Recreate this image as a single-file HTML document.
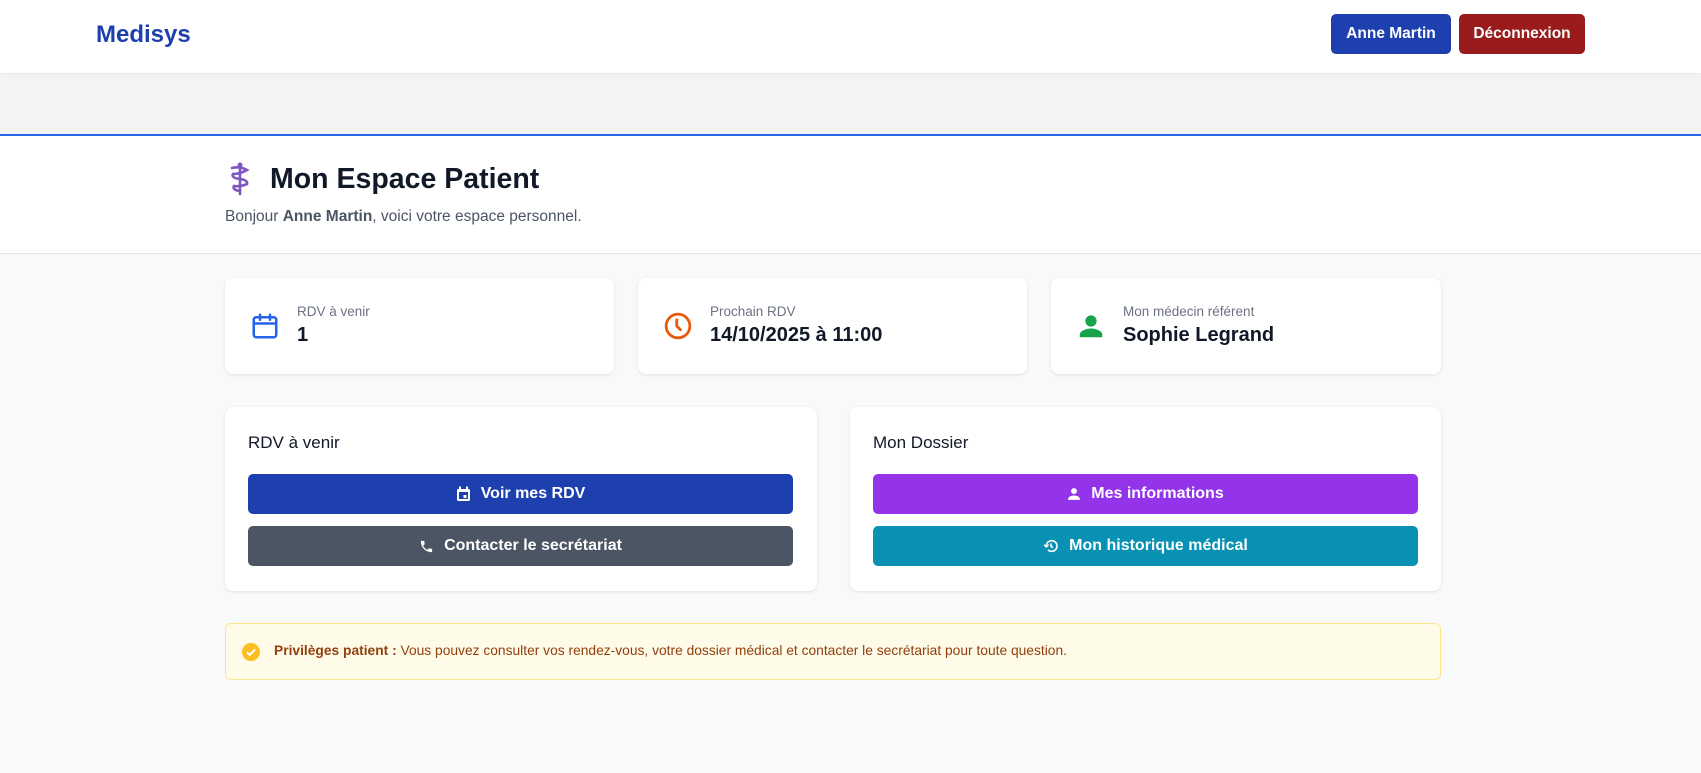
<!DOCTYPE html>
<html><head><meta charset="utf-8"><style>
*{box-sizing:border-box;margin:0;padding:0}
body{width:1701px;height:773px;background:#f8f9fb;font-family:"Liberation Sans",Arial,sans-serif;position:relative;overflow:hidden;color:#111827}
.hdr{position:absolute;left:0;top:0;width:1701px;height:73px;background:#fff;box-shadow:0 1px 3px rgba(0,0,0,.12)}
.logo{position:absolute;left:96px;top:21px;font-size:24px;font-weight:bold;color:#1e40af}
.hb{position:absolute;top:14px;height:40px;border-radius:5px;color:#fff;font-weight:bold;font-size:15.5px;line-height:40px;text-align:center}
.grey{position:absolute;left:0;top:74px;width:1701px;height:60px;background:#f3f3f3}
.hero{position:absolute;left:0;top:134px;width:1701px;height:120px;background:#fff;border-top:2px solid #2563eb;border-bottom:1px solid #e2e4e8}
.title{position:absolute;left:270px;top:163px;font-size:28.5px;font-weight:bold;color:#111827}
.sub{position:absolute;left:225px;top:208px;font-size:15.5px;color:#4b5563}
.card{position:absolute;background:#fff;border-radius:8px;box-shadow:0 1px 3px rgba(0,0,0,.1)}
.lbl{position:absolute;left:72px;top:26px;font-size:13.5px;color:#6b7280}
.val{position:absolute;left:72px;top:46px;font-size:20px;font-weight:bold;color:#111827}
.ic{position:absolute;left:25px;top:33px}
.ct{position:absolute;left:23px;top:26px;font-size:17px;color:#111827}
.btn{position:absolute;left:23px;width:545px;height:40px;border-radius:5px;color:#fff;font-weight:bold;font-size:16px;display:flex;align-items:center;justify-content:center;gap:10px}
.alert{position:absolute;left:225px;top:623px;width:1216px;height:57px;background:#fefbe8;border:1px solid #fde68a;border-radius:6px;font-size:13.8px;color:#92400e}
</style></head><body>
<div class="hdr"><div class="logo">Medisys</div>
<div class="hb" style="left:1331px;width:120px;background:#1e40af">Anne Martin</div>
<div class="hb" style="left:1459px;width:126px;background:#991b1b">Déconnexion</div></div>
<div class="grey"></div>
<div class="hero"></div>
<svg style="position:absolute;left:228px;top:162px" width="24" height="34" viewBox="0 0 24 34"><g stroke="#7e57c2" stroke-width="2.6" fill="none" stroke-linecap="round"><line x1="12" y1="2" x2="12" y2="32"/><path d="M4 6 Q12 4 19 8 Q12 12 5 12 Q3 16 12 17 Q20 18 19 22 Q12 25 6 24 Q4 28 12 29"/></g><circle cx="12" cy="3" r="2.5" fill="#7e57c2"/></svg>
<div class="title">Mon Espace Patient</div>
<div class="sub">Bonjour <b>Anne Martin</b>, voici votre espace personnel.</div>

<div class="card" style="left:225px;top:278px;width:389px;height:96px">
<svg class="ic" width="30" height="30" viewBox="0 0 24 24" fill="none" stroke="#2563eb" stroke-width="2" stroke-linecap="round"><rect x="3" y="5" width="18" height="16" rx="2"/><line x1="3" y1="10" x2="21" y2="10"/><line x1="8" y1="3" x2="8" y2="7"/><line x1="16" y1="3" x2="16" y2="7"/></svg>
<div class="lbl">RDV à venir</div><div class="val">1</div></div>
<div class="card" style="left:638px;top:278px;width:389px;height:96px">
<svg class="ic" width="30" height="30" viewBox="0 0 24 24" fill="none" stroke="#ea580c" stroke-width="2.2" stroke-linecap="round"><circle cx="12" cy="12" r="9.5"/><path d="M11 7v5l3 3"/></svg>
<div class="lbl">Prochain RDV</div><div class="val">14/10/2025 à 11:00</div></div>
<div class="card" style="left:1051px;top:278px;width:390px;height:96px">
<svg class="ic" width="30" height="30" viewBox="0 0 24 24" fill="#16a34a"><circle cx="12" cy="8" r="4.5"/><path d="M3 21v-2c0-3 5-5 9-5s9 2 9 5v2z"/></svg>
<div class="lbl">Mon médecin référent</div><div class="val">Sophie Legrand</div></div>

<div class="card" style="left:225px;top:407px;width:592px;height:184px">
<div class="ct">RDV à venir</div>
<div class="btn" style="top:67px;background:#1e40af"><svg width="15" height="16" viewBox="0 0 15 16"><rect x="1" y="3" width="13" height="12" rx="1.5" fill="#fff"/><rect x="3" y="6" width="9" height="7" fill="#1e40af"/><rect x="7.5" y="9" width="3" height="3" fill="#fff"/><rect x="3" y="0.5" width="2" height="3" fill="#fff"/><rect x="10" y="0.5" width="2" height="3" fill="#fff"/></svg>Voir mes RDV</div>
<div class="btn" style="top:119px;background:#4b5563"><svg width="15" height="15" viewBox="0 0 24 24" fill="#fff"><path d="M6.6 10.8c1.4 2.8 3.8 5.1 6.6 6.6l2.2-2.2c.3-.3.7-.4 1-.2 1.1.4 2.300.6 3.6.6.6 0 1 .4 1 1V20c0 .6-.4 1-1 1C10.6 21 3 13.4 3 4c0-.6.4-1 1-1h3.5c.6 0 1 .4 1 1 0 1.3.2 2.5.6 3.6.1.3 0 .7-.2 1z"/></svg>Contacter le secrétariat</div>
</div>
<div class="card" style="left:850px;top:407px;width:591px;height:184px">
<div class="ct">Mon Dossier</div>
<div class="btn" style="top:67px;background:#9333ea"><svg width="14" height="14" viewBox="0 0 24 24" fill="#fff"><circle cx="12" cy="7" r="5"/><path d="M2 22v-2c0-3.5 6-5.5 10-5.5s10 2 10 5.5v2z"/></svg>Mes informations</div>
<div class="btn" style="top:119px;background:#0891b2"><svg width="16" height="16" viewBox="0 0 24 24" fill="none" stroke="#fff" stroke-width="2.4"><path d="M5 12a8 8 0 1 1 2.5 5.8"/><path d="M12 8v4.5l3 2"/><path d="M1.5 10l3.5 3.5 3.5-3.5" stroke-width="2"/></svg>Mon historique médical</div>
</div>

<div class="alert">
<svg style="position:absolute;left:16px;top:19px" width="18" height="18" viewBox="0 0 18 18"><circle cx="9" cy="9" r="9" fill="#fbbf24"/><path d="M5 9.3l2.7 2.6L13 6.5" stroke="#fff" stroke-width="2" fill="none"/></svg>
<div style="position:absolute;left:48px;top:19px"><b>Privilèges patient :</b> Vous pouvez consulter vos rendez-vous, votre dossier médical et contacter le secrétariat pour toute question.</div>
</div>
</body></html>
